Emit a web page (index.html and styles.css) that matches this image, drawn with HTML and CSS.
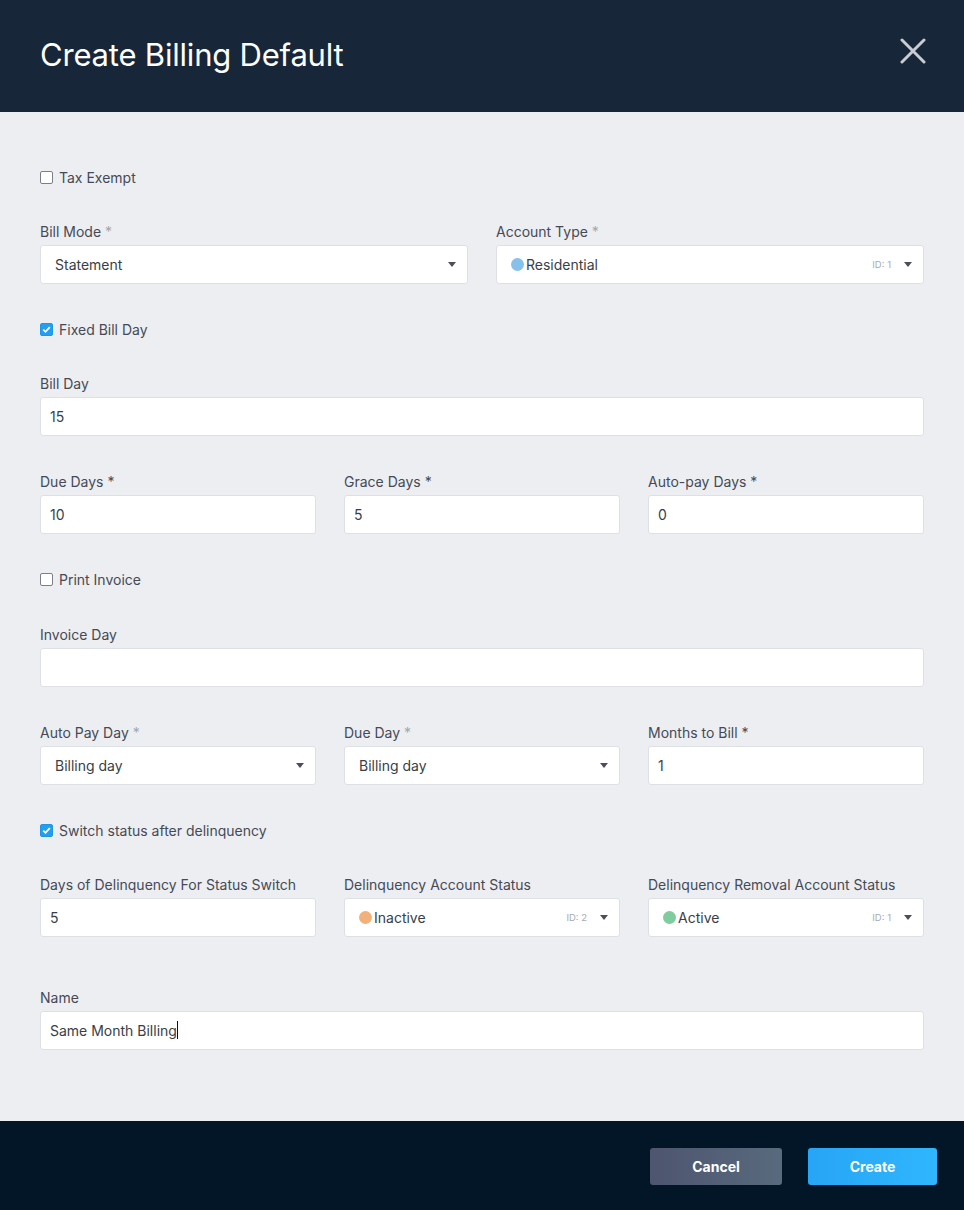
FILE: index.html
```html
<!DOCTYPE html>
<html lang="en">

<head>
    <meta charset="UTF-8">
    <title>Create Billing Default</title>
    <link rel="stylesheet" href="styles.css">
</head>

<body>
    <div class="modal">
        <div class="modal_head">
            <h1>Create Billing Default</h1>
            <span class="close">
                <svg width="26" height="26" viewBox="0 0 26 26">
                    <path d="M2 2 L24 24 M24 2 L2 24" stroke="#c9cdd3" stroke-width="3" stroke-linecap="round" fill="none"/>
                </svg>
            </span>
        </div>

        <div class="modal_body">
            <label class="check">
                <span class="box"></span>
                Tax Exempt
            </label>

            <div class="row two">
                <div class="field">
                    <div class="label">Bill Mode <i class="req light">*</i></div>
                    <div class="select">
                        <span class="val">Statement</span>
                        <span class="arrow"></span>
                    </div>
                </div>
                <div class="field">
                    <div class="label">Account Type <i class="req light">*</i></div>
                    <div class="select badge">
                        <span class="dot blue"></span>
                        <span class="val">Residential</span>
                        <span class="id">ID: 1</span>
                        <span class="arrow"></span>
                    </div>
                </div>
            </div>

            <label class="check">
                <span class="box on"></span>
                Fixed Bill Day
            </label>

            <div class="field">
                <div class="label">Bill Day</div>
                <div class="input">15</div>
            </div>

            <div class="row three">
                <div class="field">
                    <div class="label">Due Days <i class="req">*</i></div>
                    <div class="input">10</div>
                </div>
                <div class="field">
                    <div class="label">Grace Days <i class="req">*</i></div>
                    <div class="input">5</div>
                </div>
                <div class="field">
                    <div class="label">Auto-pay Days <i class="req">*</i></div>
                    <div class="input">0</div>
                </div>
            </div>

            <label class="check">
                <span class="box"></span>
                Print Invoice
            </label>

            <div class="field">
                <div class="label">Invoice Day</div>
                <div class="input"></div>
            </div>

            <div class="row three">
                <div class="field">
                    <div class="label">Auto Pay Day <i class="req light">*</i></div>
                    <div class="select">
                        <span class="val">Billing day</span>
                        <span class="arrow"></span>
                    </div>
                </div>
                <div class="field">
                    <div class="label">Due Day <i class="req light">*</i></div>
                    <div class="select">
                        <span class="val">Billing day</span>
                        <span class="arrow"></span>
                    </div>
                </div>
                <div class="field">
                    <div class="label">Months to Bill <i class="req">*</i></div>
                    <div class="input">1</div>
                </div>
            </div>

            <label class="check">
                <span class="box on"></span>
                Switch status after delinquency
            </label>

            <div class="row three">
                <div class="field">
                    <div class="label">Days of Delinquency For Status Switch</div>
                    <div class="input">5</div>
                </div>
                <div class="field">
                    <div class="label">Delinquency Account Status</div>
                    <div class="select badge">
                        <span class="dot orange"></span>
                        <span class="val">Inactive</span>
                        <span class="id">ID: 2</span>
                        <span class="arrow"></span>
                    </div>
                </div>
                <div class="field">
                    <div class="label">Delinquency Removal Account Status</div>
                    <div class="select badge">
                        <span class="dot green"></span>
                        <span class="val">Active</span>
                        <span class="id">ID: 1</span>
                        <span class="arrow"></span>
                    </div>
                </div>
            </div>

            <div class="field name">
                <div class="label">Name</div>
                <div class="input">Same Month Billing<span class="caret"></span></div>
            </div>
        </div>

        <div class="modal_foot">
            <button class="btn cancel">Cancel</button>
            <button class="btn create">Create</button>
        </div>
    </div>
</body>

</html>
```

FILE: styles.css
```css
html,
body {
    width: 100%;
    height: 100%;
    margin: 0;
    padding: 0;
}

body {
    font-family: Inter, "Noto Sans", sans-serif;
    color: #454a55;
    background: #edeef2;
}

.modal {
    width: 964px;
    min-height: 1210px;
    display: flex;
    flex-direction: column;
}

.modal_head {
    height: 112px;
    background: #172638;
    display: flex;
    align-items: center;
    justify-content: space-between;
    padding: 0 38px 0 40px;
    box-sizing: border-box;
}

.modal_head h1 {
    margin: 0 0 4px;
    font-size: 31px;
    font-weight: 400;
    color: #fff;
    letter-spacing: -0.2px;
}

.modal_head .close {
    display: block;
    height: 26px;
    margin-bottom: 10px;
}

.modal_body {
    flex: 1;
    padding: 56px 40px 70px;
    display: flex;
    flex-direction: column;
    gap: 36.8px;
}

.check {
    display: flex;
    align-items: center;
    height: 18px;
    font-size: 14px;
    gap: 6px;
}

.check .box {
    width: 11px;
    height: 11px;
    border: 1px solid #7b7f86;
    border-radius: 2px;
    background: #fff;
}

.check .box.on {
    border-color: #1f95e6;
    background: #249ff0 url("data:image/svg+xml,%3Csvg xmlns='http://www.w3.org/2000/svg' width='11' height='11' viewBox='0 0 11 11'%3E%3Cpath d='M2.3 5.6 L4.5 7.8 L8.8 3.2' stroke='white' stroke-width='1.8' fill='none'/%3E%3C/svg%3E") no-repeat center;
}

.row {
    display: grid;
    gap: 28px;
}

.row.two {
    grid-template-columns: 1fr 1fr;
}

.row.three {
    grid-template-columns: 1fr 1fr 1fr;
}

.field .label {
    font-size: 14px;
    line-height: 18px;
    margin-bottom: 4px;
    white-space: nowrap;
}

.req {
    font-style: normal;
    color: #454a55;
}

.req.light {
    color: #a3a7ad;
}

.input,
.select {
    height: 39px;
    box-sizing: border-box;
    background: #fff;
    border: 1px solid #dde0e5;
    border-radius: 3px;
    font-size: 14px;
    color: #3a3e46;
    display: flex;
    align-items: center;
}

.input {
    padding: 0 9px;
}

.select {
    padding: 0 14px;
}

.select .val {
    flex: 1;
}

.select .arrow {
    width: 0;
    height: 0;
    border-left: 4.5px solid transparent;
    border-right: 4.5px solid transparent;
    border-top: 5px solid #4b4f57;
    margin-right: -3px;
}

.select.badge {
    padding-left: 14px;
}

.select .dot {
    width: 13px;
    height: 13px;
    border-radius: 50%;
    margin-right: 2px;
}

.dot.blue {
    background: #85c1ea;
}

.dot.orange {
    background: #f2b07a;
}

.dot.green {
    background: #7fcd9e;
}

.select .id {
    font-size: 9.5px;
    color: #a6aab0;
    margin-right: 13px;
}

.field.name {
    margin-top: 15px;
}

.caret {
    display: inline-block;
    width: 1px;
    height: 18px;
    background: #111;
    vertical-align: middle;
}

.modal_foot {
    height: 89px;
    background: #031628;
    display: flex;
    align-items: center;
    justify-content: flex-end;
    gap: 26px;
    padding: 2px 27px 0 0;
    box-sizing: border-box;
}

.btn {
    height: 37px;
    border: none;
    border-radius: 3px;
    color: #fff;
    font-family: Inter, "Noto Sans", sans-serif;
    font-size: 14px;
    font-weight: 700;
}

.btn.cancel {
    width: 132px;
    background: linear-gradient(90deg, #4e556f, #586a7d);
}

.btn.create {
    width: 129px;
    background: linear-gradient(90deg, #27a5f6, #2fb6fd);
}
```
